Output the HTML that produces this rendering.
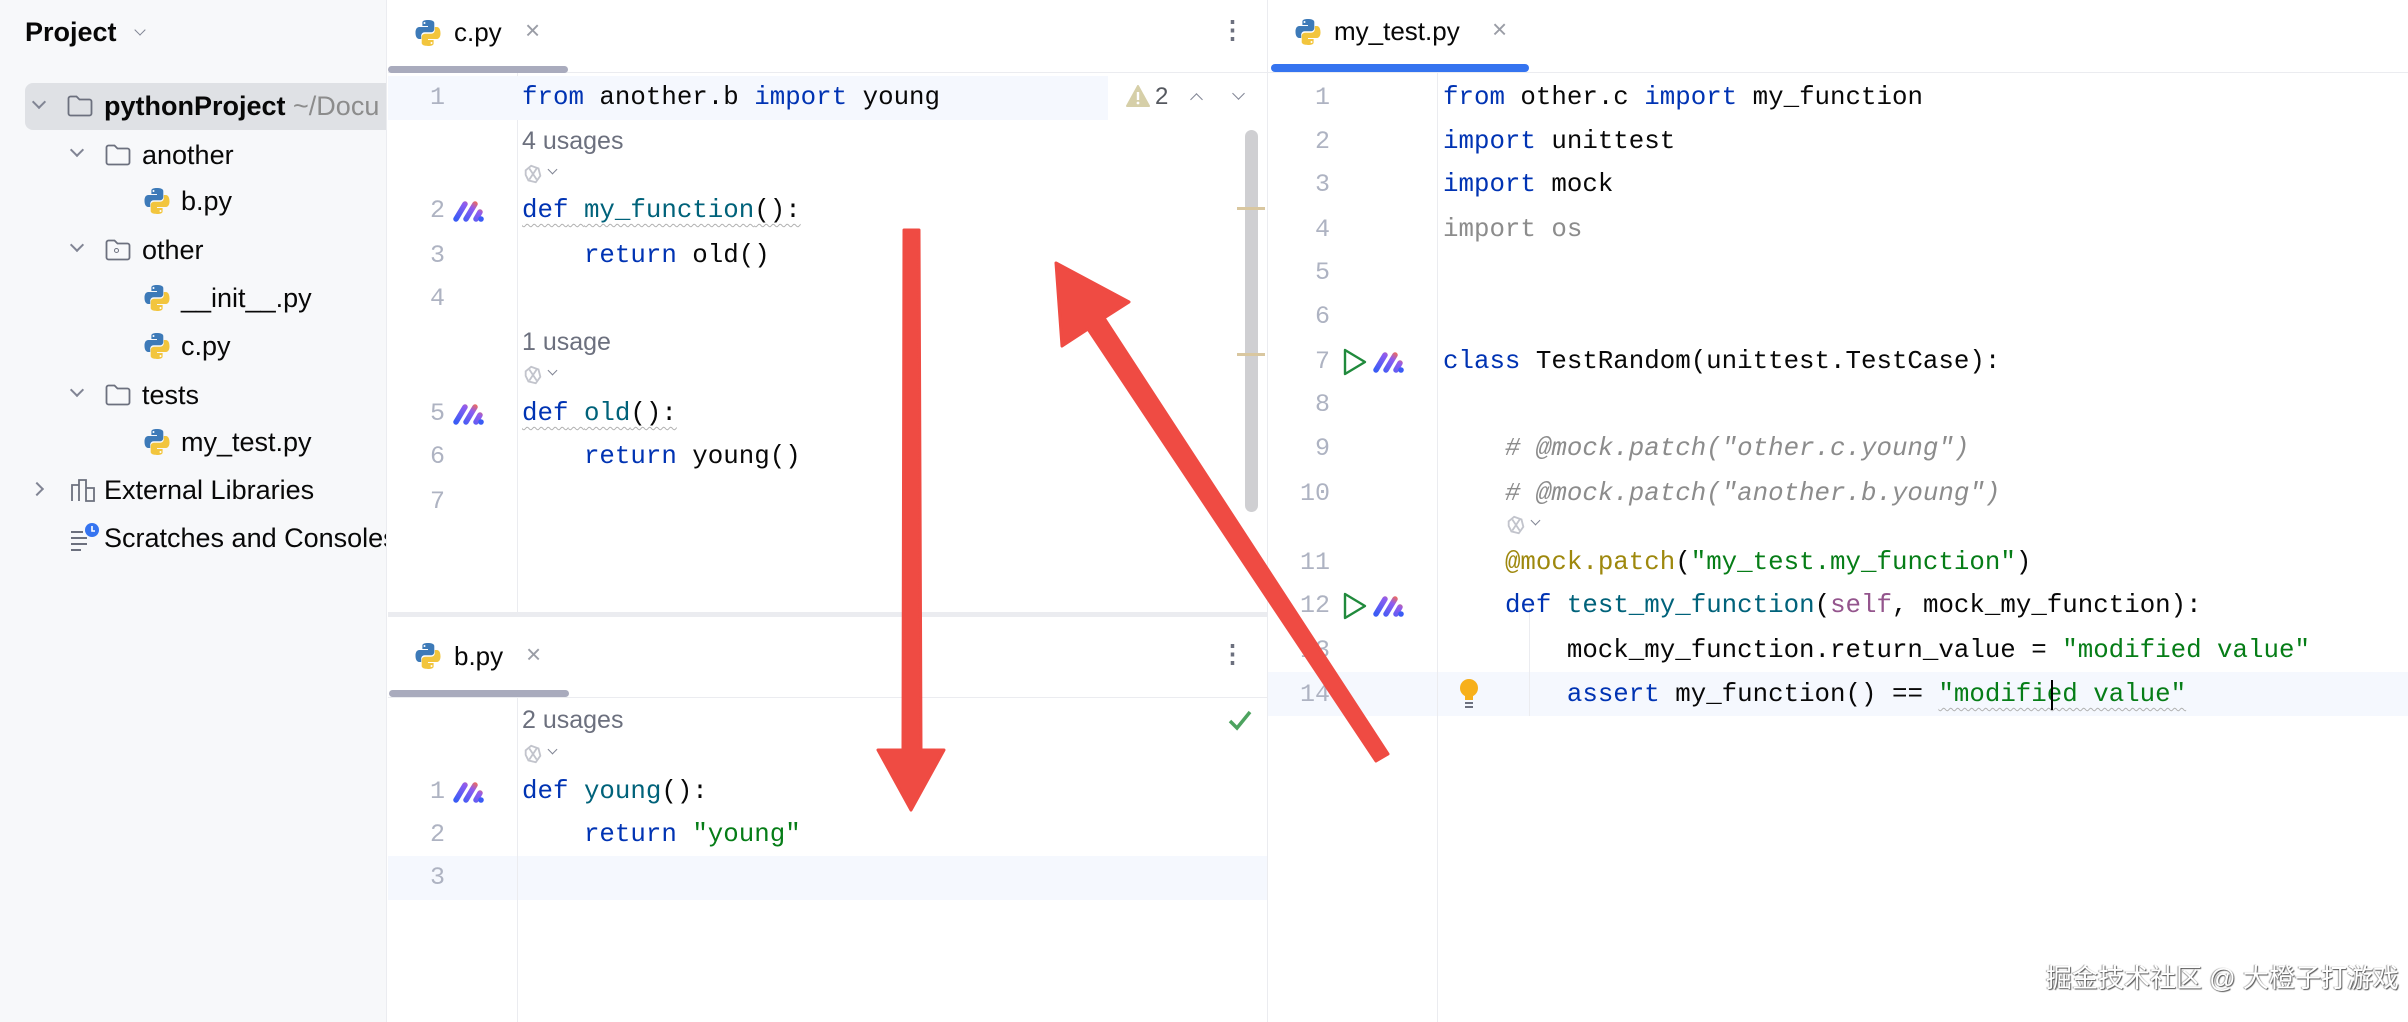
<!DOCTYPE html>
<html><head><meta charset="utf-8">
<style>
*{margin:0;padding:0;box-sizing:border-box}
body{width:2408px;height:1022px;position:relative;overflow:hidden;background:#fff;font-family:"Liberation Sans",sans-serif;color:#080808}
.abs{position:absolute}
#side{left:0;top:0;width:387px;height:1022px;background:#f7f8fa;border-right:1px solid #ebecf0;overflow:hidden}
.t{position:absolute;font-size:25px;line-height:30px;white-space:nowrap}
#side .t{font-size:27px}
.code{position:absolute;font-family:"Liberation Mono",monospace;font-size:25.8px;line-height:44px;white-space:pre;color:#080808}
.ln{position:absolute;font-family:"Liberation Mono",monospace;font-size:25px;line-height:44px;color:#aeb3c2;text-align:right;width:60px}
.k{color:#0033b3}.f{color:#00627a}.s{color:#067d17}.c{color:#8c8c8c;font-style:italic}.d{color:#9e880d}.sf{color:#94558d}.g{color:#8c8c8c}
.us{position:absolute;font-size:25px;line-height:30px;color:#6c707e}
.chev{position:absolute;width:10px;height:10px;border-right:2px solid #818594;border-bottom:2px solid #818594}
.vl{position:absolute;width:1px;background:#ebecf0}
.hl{position:absolute;background:#f5f8fe}
.wavy{text-decoration:underline wavy #b0b0b0;text-decoration-thickness:1px;text-underline-offset:6px}
</style></head><body>
<svg width="0" height="0" style="position:absolute">
<defs>
<symbol id="py" viewBox="0 0 28 28"><path d="M13.8 1C8 1 8.4 3.5 8.4 3.5V7h5.6v1H5.5S1.5 7.6 1.5 13.8 5 20 5 20h2.2v-3s-.1-3.7 3.6-3.7h6s3.5.1 3.5-3.4V4.2S20.9 1 13.8 1z" fill="#3d7ab8"/><circle cx="10.5" cy="4" r="1" fill="#fff"/><path d="M14.2 27c5.8 0 5.4-2.5 5.4-2.5V21H14v-1h8.5s4 .4 4-5.8S23 8 23 8h-2.2v3s.1 3.7-3.6 3.7h-6s-3.5-.1-3.5 3.4v5.7S7.1 27 14.2 27z" fill="#f2c53d"/><circle cx="17.5" cy="24" r="1" fill="#fff"/></symbol>
<symbol id="ml" viewBox="0 0 32 22"><defs><linearGradient id="mg" x1="0" y1="1" x2="1" y2="0"><stop offset="0" stop-color="#3a5cf5"/><stop offset=".7" stop-color="#8f5cf0"/><stop offset="1" stop-color="#f06c5a"/></linearGradient></defs><path d="M3 19L12 4M13 19L22 4M23 19L27 12" stroke="url(#mg)" stroke-width="5.5" stroke-linecap="round" fill="none"/><circle cx="28" cy="19" r="2.8" fill="#3a5cf5"/></symbol>
<symbol id="fold" viewBox="0 0 28 24"><path d="M2.5 4.5a2 2 0 0 1 2-2h6l3 3h10a2 2 0 0 1 2 2v12a2 2 0 0 1-2 2h-19a2 2 0 0 1-2-2z" fill="none" stroke="#6c707e" stroke-width="1.8"/></symbol>
<symbol id="ai" viewBox="0 0 24 24"><path d="M4 8l6-5 8 3 2 8-5 7-8-2-3-6z" fill="none" stroke="#c2c4cc" stroke-width="2"/><path d="M8 6l8 12M16 6L8 18" stroke="#c2c4cc" stroke-width="2"/></symbol>
</defs></svg>

<!-- SIDEBAR -->
<div id="side" class="abs">
 <div class="t" style="left:25px;top:17px;font-weight:bold">Project</div>
 <div class="chev" style="left:136px;top:26px;width:8px;height:8px;transform:rotate(45deg);border-width:1.5px"></div>
 <div class="abs" style="left:25px;top:83px;width:362px;height:47px;background:#dfe1e5;border-radius:8px 0 0 8px"></div>
 <div class="chev" style="left:34px;top:97px;transform:rotate(45deg)"></div>
 <svg class="abs" style="left:66px;top:94px" width="28" height="24"><use href="#fold"/></svg>
 <div class="t" style="left:104px;top:91px"><b>pythonProject</b> <span style="color:#8c8c8c">~/Docu</span></div>
 <div class="chev" style="left:72px;top:145px;transform:rotate(45deg)"></div>
 <svg class="abs" style="left:104px;top:143px" width="28" height="24"><use href="#fold"/></svg>
 <div class="t" style="left:142px;top:140px">another</div>
 <svg class="abs" style="left:143px;top:187px" width="28" height="28"><use href="#py"/></svg>
 <div class="t" style="left:181px;top:186px">b.py</div>
 <div class="chev" style="left:72px;top:240px;transform:rotate(45deg)"></div>
 <svg class="abs" style="left:104px;top:238px" width="28" height="24"><use href="#fold"/></svg>
 <div class="abs" style="left:114px;top:248px;width:5px;height:5px;border:1.5px solid #6c707e;border-radius:50%"></div>
 <div class="t" style="left:142px;top:235px">other</div>
 <svg class="abs" style="left:143px;top:284px" width="28" height="28"><use href="#py"/></svg>
 <div class="t" style="left:181px;top:283px">__init__.py</div>
 <svg class="abs" style="left:143px;top:332px" width="28" height="28"><use href="#py"/></svg>
 <div class="t" style="left:181px;top:331px">c.py</div>
 <div class="chev" style="left:72px;top:385px;transform:rotate(45deg)"></div>
 <svg class="abs" style="left:104px;top:383px" width="28" height="24"><use href="#fold"/></svg>
 <div class="t" style="left:142px;top:380px">tests</div>
 <svg class="abs" style="left:143px;top:428px" width="28" height="28"><use href="#py"/></svg>
 <div class="t" style="left:181px;top:427px">my_test.py</div>
 <div class="chev" style="left:32px;top:484px;transform:rotate(-45deg)"></div>
 <svg class="abs" style="left:70px;top:477px" width="28" height="26"><path d="M2 24V8h7v16M9 24V3h7v21M16 24V11h8v13z" fill="none" stroke="#6c707e" stroke-width="1.8"/></svg>
 <div class="t" style="left:104px;top:475px">External Libraries</div>
 <svg class="abs" style="left:70px;top:522px" width="30" height="30"><path d="M1 10h12M1 16h16M1 22h16M1 28h10" stroke="#6c707e" stroke-width="2"/><circle cx="22" cy="8" r="7" fill="#3574f0"/><path d="M22 4v5h3" stroke="#fff" stroke-width="1.6" fill="none"/></svg>
 <div class="t" style="left:104px;top:523px">Scratches and Consoles</div>
</div>

<!-- MIDDLE PANEL -->
<div class="abs" style="left:388px;top:0;width:879px;height:1022px;overflow:hidden">
 <div class="abs" style="left:0;top:72px;width:879px;height:1px;background:#ebecf0"></div>
 <svg class="abs" style="left:26px;top:19px" width="28" height="28"><use href="#py"/></svg>
 <div class="t" style="left:66px;top:17px;font-size:26px">c.py</div>
 <div class="t" style="left:137px;top:15px;color:#9a9da6;font-size:26px">×</div>
 <div class="abs" style="left:0;top:66px;width:180px;height:7px;background:#a9abbd;border-radius:4px"></div>
 <div class="t" style="left:832px;top:15px;color:#6c707e;font-weight:bold">⋮</div>
</div>

<div class="vl" style="left:517px;top:73px;height:540px"></div>
<div class="hl" style="left:388px;top:76px;width:720px;height:44px"></div>
<div class="abs" style="left:1108px;top:76px;width:158px;height:44px;background:#fff"></div>
<svg class="abs" style="left:1126px;top:85px" width="24" height="22"><path d="M12 1L23 21H1z" fill="#d6cfa8" stroke="#d6cfa8" stroke-linejoin="round" stroke-width="2"/><rect x="10.8" y="7" width="2.4" height="8" fill="#fff"/><circle cx="12" cy="18" r="1.4" fill="#fff"/></svg>
<div class="t" style="left:1155px;top:82px;font-size:24px;color:#55585f">2</div>
<div class="chev" style="left:1192px;top:95px;transform:rotate(-135deg);width:9px;height:9px;border-width:1.8px"></div>
<div class="chev" style="left:1234px;top:89px;transform:rotate(45deg);width:9px;height:9px;border-width:1.8px"></div>
<div class="abs" style="left:1245px;top:130px;width:13px;height:382px;background:#cfcfd2;border-radius:7px"></div>
<div class="abs" style="left:1237px;top:207px;width:28px;height:3px;background:#d9c7a0"></div>
<div class="abs" style="left:1237px;top:353px;width:28px;height:3px;background:#d9c7a0"></div>

<div class="ln" style="left:385px;top:76px">1</div>
<div class="code" style="left:522px;top:76px"><span class="k">from</span> another.b <span class="k">import</span> young</div>
<div class="us" style="left:522px;top:126px">4 usages</div>
<svg class="abs" style="left:522px;top:163px" width="22" height="22"><use href="#ai"/></svg>
<div class="chev" style="left:549px;top:166px;width:7px;height:7px;transform:rotate(45deg);border-width:1.3px"></div>
<div class="ln" style="left:385px;top:189px">2</div>
<svg class="abs" style="left:453px;top:200px" width="32" height="22"><use href="#ml"/></svg>
<div class="code" style="left:522px;top:189px"><span class="wavy"><span class="k">def</span> <span class="f">my_function</span>():</span></div>
<div class="ln" style="left:385px;top:234px">3</div>
<div class="code" style="left:522px;top:234px">    <span class="k">return</span> old()</div>
<div class="ln" style="left:385px;top:277px">4</div>
<div class="us" style="left:522px;top:327px">1 usage</div>
<svg class="abs" style="left:522px;top:364px" width="22" height="22"><use href="#ai"/></svg>
<div class="chev" style="left:549px;top:367px;width:7px;height:7px;transform:rotate(45deg);border-width:1.3px"></div>
<div class="ln" style="left:385px;top:392px">5</div>
<svg class="abs" style="left:453px;top:403px" width="32" height="22"><use href="#ml"/></svg>
<div class="code" style="left:522px;top:392px"><span class="wavy"><span class="k">def</span> <span class="f">old</span>():</span></div>
<div class="ln" style="left:385px;top:435px">6</div>
<div class="code" style="left:522px;top:435px">    <span class="k">return</span> young()</div>
<div class="ln" style="left:385px;top:480px">7</div>

<div class="abs" style="left:388px;top:612px;width:879px;height:5px;background:#ebecf0"></div>

<svg class="abs" style="left:414px;top:642px" width="28" height="28"><use href="#py"/></svg>
<div class="t" style="left:454px;top:641px;font-size:26px">b.py</div>
<div class="t" style="left:526px;top:639px;color:#9a9da6;font-size:26px">×</div>
<div class="t" style="left:1220px;top:639px;color:#6c707e;font-weight:bold">⋮</div>
<div class="abs" style="left:388px;top:697px;width:879px;height:1px;background:#ebecf0"></div>
<div class="abs" style="left:389px;top:690px;width:180px;height:7px;background:#a9abbd;border-radius:4px"></div>
<div class="vl" style="left:517px;top:698px;height:324px"></div>
<div class="us" style="left:522px;top:705px">2 usages</div>
<svg class="abs" style="left:1227px;top:708px" width="26" height="24"><path d="M3 13l7 7L23 4" fill="none" stroke="#4da35f" stroke-width="3.5"/></svg>
<svg class="abs" style="left:522px;top:743px" width="22" height="22"><use href="#ai"/></svg>
<div class="chev" style="left:549px;top:746px;width:7px;height:7px;transform:rotate(45deg);border-width:1.3px"></div>
<div class="ln" style="left:385px;top:770px">1</div>
<svg class="abs" style="left:453px;top:781px" width="32" height="22"><use href="#ml"/></svg>
<div class="code" style="left:522px;top:770px"><span class="k">def</span> <span class="f">young</span>():</div>
<div class="ln" style="left:385px;top:813px">2</div>
<div class="code" style="left:522px;top:813px">    <span class="k">return</span> <span class="s">"young"</span></div>
<div class="hl" style="left:388px;top:856px;width:879px;height:44px"></div>
<div class="vl" style="left:517px;top:856px;height:44px"></div>
<div class="ln" style="left:385px;top:856px">3</div>

<!-- RIGHT PANEL -->
<div class="abs" style="left:1267px;top:0;width:1px;height:1022px;background:#ebecf0"></div>
<div class="abs" style="left:1268px;top:72px;width:1140px;height:1px;background:#ebecf0"></div>
<svg class="abs" style="left:1294px;top:18px" width="28" height="28"><use href="#py"/></svg>
<div class="t" style="left:1334px;top:16px;font-size:26px">my_test.py</div>
<div class="t" style="left:1492px;top:14px;color:#9a9da6;font-size:26px">×</div>
<div class="abs" style="left:1271px;top:64px;width:258px;height:8px;background:#3574f0;border-radius:4px"></div>
<div class="hl" style="left:1268px;top:672px;width:1140px;height:44px"></div>
<div class="vl" style="left:1437px;top:73px;height:949px"></div>
<div class="vl" style="left:1529px;top:605px;height:111px"></div>

<div class="ln" style="left:1270px;top:76px">1</div>
<div class="code" style="left:1443px;top:76px"><span class="k">from</span> other.c <span class="k">import</span> my_function</div>
<div class="ln" style="left:1270px;top:120px">2</div>
<div class="code" style="left:1443px;top:120px"><span class="k">import</span> unittest</div>
<div class="ln" style="left:1270px;top:163px">3</div>
<div class="code" style="left:1443px;top:163px"><span class="k">import</span> mock</div>
<div class="ln" style="left:1270px;top:208px">4</div>
<div class="code" style="left:1443px;top:208px"><span class="g">import os</span></div>
<div class="ln" style="left:1270px;top:251px">5</div>
<div class="ln" style="left:1270px;top:295px">6</div>
<div class="ln" style="left:1270px;top:340px">7</div>
<svg class="abs" style="left:1341px;top:347px" width="28" height="30"><path d="M4 3L24 15 4 27z" fill="none" stroke="#208a3c" stroke-width="2.4" stroke-linejoin="round"/></svg>
<svg class="abs" style="left:1373px;top:351px" width="32" height="22"><use href="#ml"/></svg>
<div class="code" style="left:1443px;top:340px"><span class="k">class</span> TestRandom(unittest.TestCase):</div>
<div class="ln" style="left:1270px;top:383px">8</div>
<div class="ln" style="left:1270px;top:427px">9</div>
<div class="code" style="left:1443px;top:427px">    <span class="c"># @mock.patch("other.c.young")</span></div>
<div class="ln" style="left:1270px;top:472px">10</div>
<div class="code" style="left:1443px;top:472px">    <span class="c"># @mock.patch("another.b.young")</span></div>
<svg class="abs" style="left:1505px;top:514px" width="22" height="22"><use href="#ai"/></svg>
<div class="chev" style="left:1532px;top:517px;width:7px;height:7px;transform:rotate(45deg);border-width:1.3px"></div>
<div class="ln" style="left:1270px;top:541px">11</div>
<div class="code" style="left:1443px;top:541px">    <span class="d">@mock.patch</span>(<span class="s">"my_test.my_function"</span>)</div>
<div class="ln" style="left:1270px;top:584px">12</div>
<svg class="abs" style="left:1341px;top:591px" width="28" height="30"><path d="M4 3L24 15 4 27z" fill="none" stroke="#208a3c" stroke-width="2.4" stroke-linejoin="round"/></svg>
<svg class="abs" style="left:1373px;top:595px" width="32" height="22"><use href="#ml"/></svg>
<div class="code" style="left:1443px;top:584px">    <span class="k">def</span> <span class="f">test_my_function</span>(<span class="sf">self</span>, mock_my_function):</div>
<div class="ln" style="left:1270px;top:629px">13</div>
<div class="code" style="left:1443px;top:629px">        mock_my_function.return_value = <span class="s">"modified value"</span></div>
<div class="ln" style="left:1270px;top:673px">14</div>
<svg class="abs" style="left:1457px;top:677px" width="24" height="34"><circle cx="12" cy="11" r="9" fill="#f7b01b"/><rect x="8" y="17" width="8" height="6" fill="#f7b01b"/><path d="M8 26h8M8 30h8" stroke="#6c707e" stroke-width="2"/></svg>
<div class="code" style="left:1443px;top:673px">        <span class="k">assert</span> my_function() == <span class="s wavy">"modified value"</span></div>
<div class="abs" style="left:2051px;top:680px;width:2px;height:30px;background:#000"></div>

<!-- ARROWS -->
<svg class="abs" style="left:0;top:0" width="2408" height="1022">
 <polygon points="904,230 919,230 921,750 944,750 911,810 878,750 903,750" fill="#ef4b43" stroke="#ef4b43" stroke-width="3" stroke-linejoin="round"/>
 <polygon points="1056,263 1129,302 1104,318 1388,754 1376,761 1088,329 1062,346" fill="#ef4b43" stroke="#ef4b43" stroke-width="3" stroke-linejoin="round"/>
</svg>

<div class="abs" style="left:2046px;top:962px;font-family:'Liberation Sans','Noto Sans CJK SC',sans-serif;font-size:26px;line-height:32px;color:#fff;text-shadow:1px 1px 1px #555,-1px 0 1px #999;white-space:nowrap">掘金技术社区 @ 大橙子打游戏</div>
</body></html>
